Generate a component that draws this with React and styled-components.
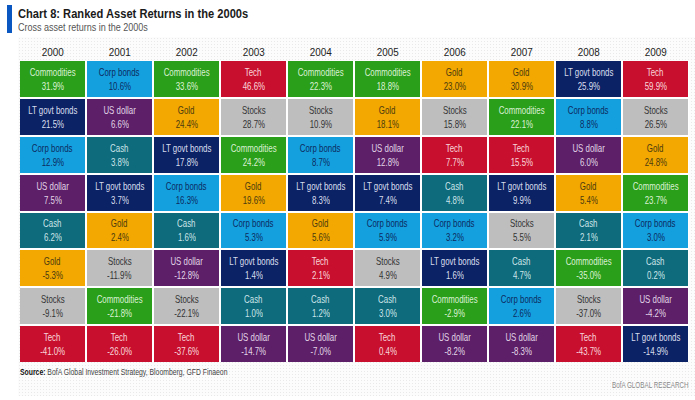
import React from "react";
import styled, { createGlobalStyle } from "styled-components";

const GlobalStyle = createGlobalStyle`
  html, body {
    margin: 0;
    padding: 0;
    background: #ffffff;
  }
  body {
    font-family: "Liberation Sans", Arial, sans-serif;
  }
`;

const assets = {
  Commodities: { bg: "#2a9f19", fg: "rgba(235,250,230,0.92)" },
  "Corp bonds": { bg: "#14a0de", fg: "#0d2b5e" },
  Tech: { bg: "#c8102e", fg: "rgba(255,232,236,0.92)" },
  "LT govt bonds": { bg: "#0b2265", fg: "rgba(235,240,255,0.92)" },
  "US dollar": { bg: "#5c1f68", fg: "rgba(245,232,248,0.9)" },
  Gold: { bg: "#f2a800", fg: "#4a3a10" },
  Stocks: { bg: "#bebebe", fg: "#333333" },
  Cash: { bg: "#0e6b7c", fg: "rgba(225,245,248,0.9)" },
};

const years = [
  ["2000", [["Commodities", "31.9%"], ["LT govt bonds", "21.5%"], ["Corp bonds", "12.9%"], ["US dollar", "7.5%"], ["Cash", "6.2%"], ["Gold", "-5.3%"], ["Stocks", "-9.1%"], ["Tech", "-41.0%"]]],
  ["2001", [["Corp bonds", "10.6%"], ["US dollar", "6.6%"], ["Cash", "3.8%"], ["LT govt bonds", "3.7%"], ["Gold", "2.4%"], ["Stocks", "-11.9%"], ["Commodities", "-21.8%"], ["Tech", "-26.0%"]]],
  ["2002", [["Commodities", "33.6%"], ["Gold", "24.4%"], ["LT govt bonds", "17.8%"], ["Corp bonds", "16.3%"], ["Cash", "1.6%"], ["US dollar", "-12.8%"], ["Stocks", "-22.1%"], ["Tech", "-37.6%"]]],
  ["2003", [["Tech", "46.6%"], ["Stocks", "28.7%"], ["Commodities", "24.2%"], ["Gold", "19.6%"], ["Corp bonds", "5.3%"], ["LT govt bonds", "1.4%"], ["Cash", "1.0%"], ["US dollar", "-14.7%"]]],
  ["2004", [["Commodities", "22.3%"], ["Stocks", "10.9%"], ["Corp bonds", "8.7%"], ["LT govt bonds", "8.3%"], ["Gold", "5.6%"], ["Tech", "2.1%"], ["Cash", "1.2%"], ["US dollar", "-7.0%"]]],
  ["2005", [["Commodities", "18.8%"], ["Gold", "18.1%"], ["US dollar", "12.8%"], ["LT govt bonds", "7.4%"], ["Corp bonds", "5.9%"], ["Stocks", "4.9%"], ["Cash", "3.0%"], ["Tech", "0.4%"]]],
  ["2006", [["Gold", "23.0%"], ["Stocks", "15.8%"], ["Tech", "7.7%"], ["Cash", "4.8%"], ["Corp bonds", "3.2%"], ["LT govt bonds", "1.6%"], ["Commodities", "-2.9%"], ["US dollar", "-8.2%"]]],
  ["2007", [["Gold", "30.9%"], ["Commodities", "22.1%"], ["Tech", "15.5%"], ["LT govt bonds", "9.9%"], ["Stocks", "5.5%"], ["Cash", "4.7%"], ["Corp bonds", "2.6%"], ["US dollar", "-8.3%"]]],
  ["2008", [["LT govt bonds", "25.9%"], ["Corp bonds", "8.8%"], ["US dollar", "6.0%"], ["Gold", "5.4%"], ["Cash", "2.1%"], ["Commodities", "-35.0%"], ["Stocks", "-37.0%"], ["Tech", "-43.7%"]]],
  ["2009", [["Tech", "59.9%"], ["Stocks", "26.5%"], ["Gold", "24.8%"], ["Commodities", "23.7%"], ["Corp bonds", "3.0%"], ["Cash", "0.2%"], ["US dollar", "-4.2%"], ["LT govt bonds", "-14.9%"]]],
];

// the source font is a condensed face; squeeze Liberation Sans horizontally
const Squeeze = styled.span`
  display: inline-block;
  white-space: nowrap;
  transform: scaleX(${(p) => p.$sx || 0.82});
  transform-origin: ${(p) => p.$origin || "center"};
`;

const Page = styled.div`
  width: 695px;
  height: 400px;
  overflow: hidden;
  display: flex;
  flex-direction: column;
`;

const Header = styled.div`
  display: flex;
  align-items: stretch;
  padding: 5px 0 0 7px;
  height: 28px;
`;

const Accent = styled.div`
  width: 5px;
  background-color: #0a57c2;
`;

const Titles = styled.div`
  margin-left: 6px;
  display: flex;
  flex-direction: column;
`;

const Title = styled.div`
  font-size: 12.5px;
  font-weight: 700;
  color: #1a1a1a;
  line-height: 14px;
  margin-top: 2px;
`;

const Subtitle = styled.div`
  font-size: 11px;
  color: #555555;
  line-height: 13px;
`;

const Panel = styled.div`
  flex: 1;
  margin: 4px 0 4px 18px;
  padding: 0 6px 0 2px;
  background-color: #fcfcfc;
  background-image: radial-gradient(#e9e9e9 0.7px, transparent 0.8px);
  background-size: 3px 3px;
  display: flex;
  flex-direction: column;
`;

const YearRow = styled.div`
  display: grid;
  grid-template-columns: repeat(10, 65px);
  column-gap: 2px;
  height: 24px;
  align-items: end;
`;

const Year = styled.div`
  text-align: center;
  font-size: 11.5px;
  color: #222222;
  line-height: 14px;
  padding-bottom: 2px;
`;

const Grid = styled.div`
  display: grid;
  grid-template-columns: repeat(10, 65px);
  grid-template-rows: repeat(8, 1fr);
  grid-auto-flow: column;
  column-gap: 2px;
  row-gap: 2px;
  height: 301px;
  background: #ffffff;
`;

const Cell = styled.div`
  background-color: ${(p) => p.$bg};
  color: ${(p) => p.$fg};
  display: flex;
  flex-direction: column;
  align-items: center;
  justify-content: center;
  font-size: 10.5px;
  line-height: 14px;
  white-space: nowrap;
`;

const Source = styled.div`
  margin-top: 5px;
  font-size: 9px;
  color: #444444;
  line-height: 11px;

  b {
    color: #111111;
  }
`;

const Credit = styled.div`
  align-self: flex-end;
  font-size: 8.5px;
  color: #8a8a8a;
  line-height: 10px;
  margin-top: 2px;
`;

export default function App() {
  return (
    <Page>
      <GlobalStyle />
      <Header>
        <Accent />
        <Titles>
          <Title>
            <Squeeze $sx={0.89} $origin="left">Chart 8: Ranked Asset Returns in the 2000s</Squeeze>
          </Title>
          <Subtitle>
            <Squeeze $sx={0.82} $origin="left">Cross asset returns in the 2000s</Squeeze>
          </Subtitle>
        </Titles>
      </Header>
      <Panel>
        <YearRow>
          {years.map(([y]) => (
            <Year key={y}>
              <Squeeze $sx={0.86}>{y}</Squeeze>
            </Year>
          ))}
        </YearRow>
        <Grid>
          {years.map(([y, cells]) =>
            cells.map(([name, value]) => (
              <Cell key={y + name} $bg={assets[name].bg} $fg={assets[name].fg}>
                <Squeeze $sx={0.75}>{name}</Squeeze>
                <Squeeze $sx={0.75}>{value}</Squeeze>
              </Cell>
            ))
          )}
        </Grid>
        <Source>
          <Squeeze $sx={0.76} $origin="left">
            <b>Source:</b> BofA Global Investment Strategy, Bloomberg, GFD Finaeon
          </Squeeze>
        </Source>
        <Credit>
          <Squeeze $sx={0.74} $origin="right">BofA GLOBAL RESEARCH</Squeeze>
        </Credit>
      </Panel>
    </Page>
  );
}
